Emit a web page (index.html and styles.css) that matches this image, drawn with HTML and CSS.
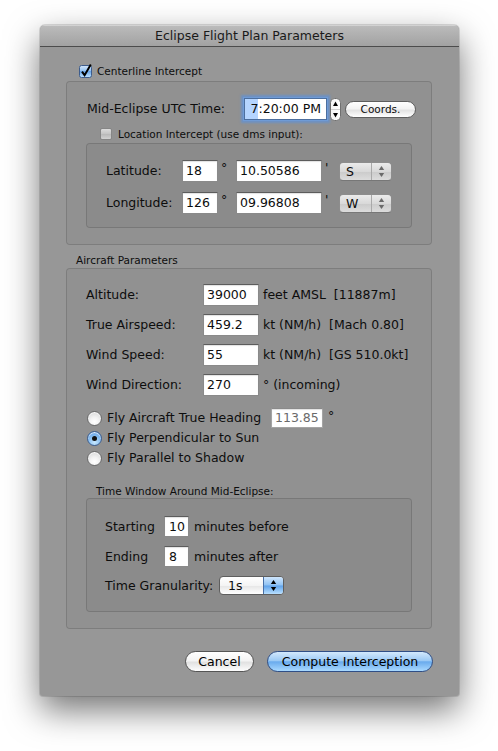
FILE: index.html
```html
<!DOCTYPE html>
<html>
<head>
<meta charset="utf-8">
<title>Eclipse Flight Plan Parameters</title>
<link rel="stylesheet" href="styles.css">
</head>
<body>
<div class="window">
  <div class="titlebar">Eclipse Flight Plan Parameters</div>
  <div class="content">
    <div class="check-row top-check">
      <svg class="cb" width="14" height="14" viewBox="0 0 14 14">
        <defs>
          <linearGradient id="cbg" x1="0" y1="0" x2="0" y2="1">
            <stop offset="0" stop-color="#d6e8fc"/>
            <stop offset=".45" stop-color="#93c1f1"/>
            <stop offset=".5" stop-color="#6aa6ea"/>
            <stop offset="1" stop-color="#bfe3ff"/>
          </linearGradient>
        </defs>
        <rect x="0.5" y="1.5" width="12" height="12" rx="2" fill="url(#cbg)" stroke="#3d5c8c"/>
        <path d="M3 7.6 L5.6 11.2 L11.8 0.6" fill="none" stroke="#000" stroke-width="2"/>
      </svg>
      <span class="small">Centerline Intercept</span>
    </div>

    <div class="box box1">
      <div class="row time-row">
        <span class="lbl time-lbl">Mid-Eclipse UTC Time:</span>
        <div class="field focus time-field"><span class="sel">7</span><span>:20:00 PM</span></div>
        <svg class="stepper" width="11" height="23" viewBox="0 0 11 23">
          <defs>
            <linearGradient id="stg" x1="0" y1="0" x2="1" y2="0">
              <stop offset="0" stop-color="#f4f4f4"/>
              <stop offset="1" stop-color="#ffffff"/>
            </linearGradient>
          </defs>
          <rect x="0.5" y="0.5" width="10" height="22" rx="4" fill="url(#stg)" stroke="#707070"/>
          <line x1="1" y1="11.5" x2="10" y2="11.5" stroke="#d0d0d0"/>
          <path d="M5.5 3.5 L3 8 L8 8 Z" fill="#000"/>
          <path d="M5.5 19.5 L3 15 L8 15 Z" fill="#000"/>
        </svg>
        <div class="pill coords">Coords.</div>
      </div>

      <div class="check-row loc-check">
        <span class="cb-off"></span>
        <span class="small">Location Intercept (use dms input):</span>
      </div>

      <div class="box inner coord-box">
        <div class="row">
          <span class="lbl coord-lbl">Latitude:</span>
          <div class="field deg">18</div><span class="sym deg-sym">°</span>
          <div class="field mins">10.50586</div><span class="sym min-sym">'</span>
          <div class="popup">
            <span class="pop-text">S</span>
            <span class="pop-arrows">
              <svg width="9" height="13" viewBox="0 0 9 13"><path d="M4.5 1 L1.8 5 L7.2 5 Z" fill="#6a6a6a"/><path d="M4.5 12 L1.8 8 L7.2 8 Z" fill="#6a6a6a"/></svg>
            </span>
          </div>
        </div>
        <div class="row long-row">
          <span class="lbl coord-lbl">Longitude:</span>
          <div class="field deg">126</div><span class="sym deg-sym">°</span>
          <div class="field mins">09.96808</div><span class="sym min-sym">'</span>
          <div class="popup">
            <span class="pop-text">W</span>
            <span class="pop-arrows">
              <svg width="9" height="13" viewBox="0 0 9 13"><path d="M4.5 1 L1.8 5 L7.2 5 Z" fill="#6a6a6a"/><path d="M4.5 12 L1.8 8 L7.2 8 Z" fill="#6a6a6a"/></svg>
            </span>
          </div>
        </div>
      </div>
    </div>

    <div class="small group-title">Aircraft Parameters</div>

    <div class="box box2">
      <div class="row param-row">
        <span class="lbl param-lbl">Altitude:</span>
        <div class="field param">39000</div>
        <span class="lbl unit">feet AMSL  [11887m]</span>
      </div>
      <div class="row param-row gap-row">
        <span class="lbl param-lbl">True Airspeed:</span>
        <div class="field param">459.2</div>
        <span class="lbl unit">kt (NM/h)  [Mach 0.80]</span>
      </div>
      <div class="row param-row gap-row">
        <span class="lbl param-lbl">Wind Speed:</span>
        <div class="field param">55</div>
        <span class="lbl unit">kt (NM/h)  [GS 510.0kt]</span>
      </div>
      <div class="row param-row gap-row">
        <span class="lbl param-lbl">Wind Direction:</span>
        <div class="field param">270</div>
        <span class="lbl unit">° (incoming)</span>
      </div>

      <div class="radios">
        <div class="row radio-row">
          <span class="radio"></span>
          <span class="lbl radio-lbl heading-lbl">Fly Aircraft True Heading</span>
          <div class="field heading">113.85</div>
          <span class="lbl heading-sym">°</span>
        </div>
        <div class="row radio-row">
          <span class="radio on"></span>
          <span class="lbl radio-lbl">Fly Perpendicular to Sun</span>
        </div>
        <div class="row radio-row">
          <span class="radio"></span>
          <span class="lbl radio-lbl">Fly Parallel to Shadow</span>
        </div>
      </div>

      <div class="small sub-title">Time Window Around Mid-Eclipse:</div>

      <div class="box inner time-box">
        <div class="row win-row">
          <span class="lbl win-lbl">Starting</span>
          <div class="field win">10</div>
          <span class="lbl win-unit">minutes before</span>
        </div>
        <div class="row win-row gap-win">
          <span class="lbl win-lbl">Ending</span>
          <div class="field win">8</div>
          <span class="lbl win-unit">minutes after</span>
        </div>
        <div class="row gran-row">
          <span class="lbl gran-lbl">Time Granularity:</span>
          <div class="gpopup">
            <span class="gp-text">1s</span>
            <span class="gp-arrows">
              <svg width="9" height="13" viewBox="0 0 9 13"><path d="M4.5 1 L1.8 5 L7.2 5 Z" fill="#000"/><path d="M4.5 12 L1.8 8 L7.2 8 Z" fill="#000"/></svg>
            </span>
          </div>
        </div>
      </div>
    </div>

    <div class="buttons">
      <div class="btn cancel">Cancel</div>
      <div class="btn default">Compute Interception</div>
    </div>
  </div>
</div>
</body>
</html>
```

FILE: styles.css
```css
* { box-sizing: border-box; }
html, body { margin: 0; padding: 0; background: #ffffff; }
body {
  width: 498px;
  height: 751px;
  overflow: hidden;
  padding: 25px 0 0 40px;
  font-family: "DejaVu Sans", "Noto Sans", sans-serif;
  color: #0d0d0d;
}
.window {
  width: 419px;
  height: 671px;
  background: #979797;
  border-radius: 5px 5px 3px 3px;
  box-shadow: 0 14px 34px rgba(0,0,0,0.55), 0 0 0 1px rgba(0,0,0,0.12);
  display: flex;
  flex-direction: column;
  overflow: hidden;
}
.titlebar {
  height: 22px;
  flex: none;
  border-bottom: 1px solid #4c4c4c;
  background: linear-gradient(#bcbcbc, #a2a2a2);
  box-shadow: inset 0 1px 0 rgba(255,255,255,0.35);
  font-size: 12.5px;
  line-height: 21px;
  text-align: center;
  color: #1a1a1a;
}
.content {
  padding: 17px 26px 0 26px;
  display: flex;
  flex-direction: column;
}
.small { font-size: 10.5px; line-height: 14px; white-space: nowrap; }
.lbl { font-size: 12.5px; line-height: 16px; white-space: pre; }
.row { display: flex; align-items: center; }
.check-row { display: flex; align-items: center; }
.top-check { height: 14px; padding-left: 13px; gap: 4px; }
.cb { display: block; overflow: visible; flex: none; }

.box {
  border: 1px solid rgba(0,0,0,0.14);
  border-radius: 4px;
  background: rgba(0,0,0,0.035);
}
.box1 { width: 366px; margin-top: 3px; padding: 16px 0 16px 19px; }

.time-row { height: 22px; }
.time-lbl { width: 157px; margin-left: 1px; }
.field {
  height: 22px;
  background: #ffffff;
  border: 1px solid #8a8a8a;
  border-top-color: #5c5c5c;
  box-shadow: inset 0 1px 1px rgba(0,0,0,0.12);
  font-size: 12.5px;
  line-height: 20px;
  padding-left: 3px;
  white-space: nowrap;
  flex: none;
}
.time-field {
  width: 83px;
  display: flex;
  justify-content: flex-end;
  padding: 0 5px 0 0;
}
.time-field .sel { flex: 1; text-align: right; background: #b5d5ff; }
.focus { box-shadow: 0 0 0 1px #6f9bd6, 0 0 2px 3px rgba(96,146,214,0.75); border-color: #4d6f9e; }
.stepper { display: block; flex: none; margin-left: 3px; }
.pill {
  height: 17px;
  border: 1px solid #5e5e5e;
  border-radius: 9px;
  background: linear-gradient(#ffffff 0%, #f3f3f3 45%, #e3e3e3 55%, #ffffff 100%);
  font-size: 10.5px;
  line-height: 15px;
  text-align: center;
  flex: none;
}
.coords { width: 71px; margin-left: 4px; }

.loc-check { height: 12px; margin-top: 8px; gap: 6px; }
.cb-off {
  width: 12px; height: 12px;
  margin-left: 14px;
  border: 1px solid #868686;
  border-radius: 2px;
  background: linear-gradient(#dcdcdc, #c4c4c4 50%, #b8b8b8 51%, #d2d2d2);
  flex: none;
}
.inner { width: 326px; margin-top: 3px; }
.coord-box { height: 85px; padding: 16px 0 13px 19px; }
.coord-box .row { height: 22px; }
.coord-box .long-row { margin-top: 10px; }
.coord-lbl { width: 76px; }
.deg { width: 36px; }
.mins { width: 86px; }
.sym { font-size: 12.5px; line-height: 16px; padding-left: 3px; align-self: flex-start; padding-top: 0; }
.deg-sym { width: 18px; }
.min-sym { width: 17px; }
.popup {
  width: 53px;
  height: 19px;
  border: 1px solid #8d8d8d;
  border-bottom-color: #777;
  border-radius: 4px;
  background: linear-gradient(#ebebeb, #d9d9d9 50%, #cbcbcb 52%, #dcdcdc);
  display: flex;
  align-items: center;
  flex: none;
}
.pop-text { width: 32px; padding-left: 6px; font-size: 12.5px; line-height: 17px; border-right: 1px solid #a9a9a9; height: 17px; }
.pop-arrows { flex: 1; display: flex; justify-content: center; align-items: center; }
.pop-arrows svg { display: block; }

.group-title { margin-top: 8px; height: 15px; line-height: 15px; padding-left: 10px; }

.box2 { width: 366px; padding: 15px 0 16px 19px; }
.param-row { height: 22px; }
.gap-row { margin-top: 8px; }
.param-lbl { width: 117px; }
.param { width: 56px; }
.unit { margin-left: 4px; }

.radios { margin-top: 12px; }
.radio-row { height: 20px; }
.radio {
  width: 15px; height: 15px;
  margin-left: 1px;
  border-radius: 50%;
  border: 1px solid #6b6b6b;
  background: radial-gradient(circle at 50% 75%, #ffffff 0%, #f2f2f2 40%, #cfcfcf 100%);
  box-shadow: inset 0 1px 1px rgba(255,255,255,0.9);
  flex: none;
  position: relative;
}
.radio.on {
  border-color: #3b5d8f;
  background: radial-gradient(circle at 50% 80%, #c7e8ff 0%, #8dc2f3 45%, #4f93e3 100%);
}
.radio.on::after {
  content: "";
  position: absolute;
  left: 4px; top: 4px;
  width: 5px; height: 5px;
  border-radius: 50%;
  background: #111;
}
.radio-lbl { margin-left: 5px; }
.heading-lbl { width: 164px; }
.heading { width: 52px; height: 20px; line-height: 18px; color: #6a6a6a; border-color: #a4a4a4; border-top-color: #8a8a8a; }
.heading-sym { padding-left: 5px; align-self: flex-start; }

.sub-title { margin-top: 16px; height: 14px; padding-left: 10px; }
.time-box { margin-top: 0; height: 114px; padding: 17px 0 16px 18px; }
.win-row { height: 21px; }
.gap-win { margin-top: 9px; }
.win-lbl { width: 59px; }
.win { width: 25px; height: 21px; line-height: 19px; padding-left: 4px; }
.win-unit { margin-left: 5px; }
.gran-row { height: 19px; margin-top: 9px; }
.gran-lbl { width: 114px; }
.gpopup {
  width: 65px;
  height: 19px;
  border: 1px solid #5e5e5e;
  border-radius: 4px;
  display: flex;
  overflow: hidden;
  flex: none;
  background: linear-gradient(#ffffff, #f4f4f4 50%, #e6e6e6 52%, #ffffff);
}
.gp-text { width: 43px; padding-left: 8px; font-size: 12.5px; line-height: 17px; }
.gp-arrows {
  flex: 1;
  display: flex; align-items: center; justify-content: center;
  border-left: 1px solid #476fa6;
  background: linear-gradient(#cfe6fd, #8fc2f3 48%, #5fa2ea 52%, #b9e0ff);
}
.gp-arrows svg { display: block; }

.buttons {
  margin-top: 22px;
  height: 21px;
  display: flex;
  justify-content: flex-end;
  gap: 13px;
}
.btn {
  height: 21px;
  border-radius: 11px;
  font-size: 12.5px;
  line-height: 19px;
  text-align: center;
  color: #000;
}
.cancel {
  width: 69px;
  border: 1px solid #555;
  background: linear-gradient(#ffffff 0%, #f4f4f4 45%, #e2e2e2 55%, #fdfdfd 100%);
}
.default {
  width: 166px;
  border: 1px solid #2f4e86;
  background: linear-gradient(#d3e9fd 0%, #9ccaf5 45%, #6aabed 52%, #a9d9ff 100%);
}
```
